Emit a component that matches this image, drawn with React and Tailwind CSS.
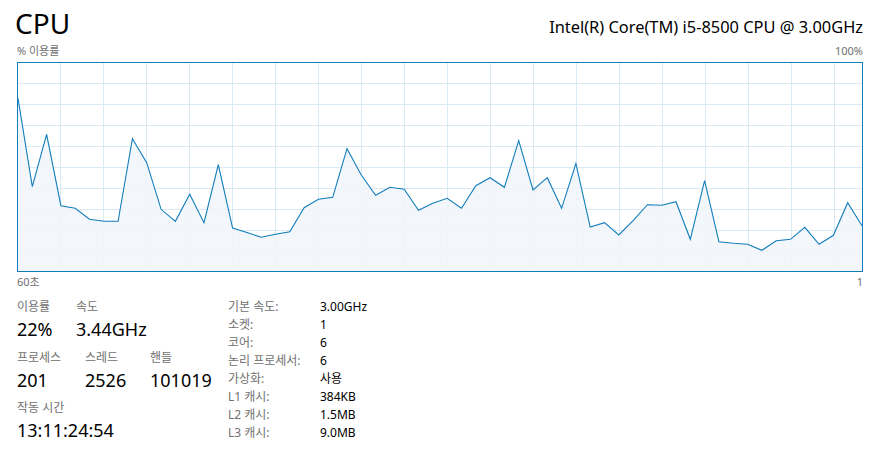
const font = { fontFamily: '"Noto Sans", "Noto Sans CJK KR", sans-serif' };

// samples read off the graph, page y coords (top of graph = 63)
const samples = [
  98.3, 186.7, 134.3, 205.7, 208.3, 219.3, 221.3, 221.3, 138.7, 162.7,
  209.3, 221.3, 194.3, 222.7, 164.7, 228, 232.4, 237.3, 234.3, 231.7,
  207.7, 199.3, 197.3, 148.7, 175, 195.3, 187.3, 189.3, 210.3, 203.3,
  198.3, 208.3, 185.7, 177.7, 187.3, 140.7, 190, 177.7, 208.3, 163.7,
  227, 222.7, 235, 220.7, 204.7, 205.3, 201.7, 239.3, 180.7, 241.7,
  243.3, 244.3, 250.3, 240.7, 239.3, 227.3, 244.3, 235.3, 202.7, 225.7,
];

const W = 844;
const H = 208;

function Graph() {
  const pts = samples.map((y, i) => [(i * W) / (samples.length - 1), y - 63]);
  const line = pts.map(([x, y]) => `${x.toFixed(1)},${y.toFixed(1)}`).join(" ");
  const area = `0,${H} ${line} ${W},${H}`;
  const vlines = [];
  for (let x = 42.5; x < W; x += 43) vlines.push(x);
  const hlines = [];
  for (let y = 20.5; y < H; y += 21) hlines.push(y);

  return (
    <div className="h-[210px] border border-[#117dbb] bg-white">
      <svg width={W} height={H} viewBox={`0 0 ${W} ${H}`} className="block">
        {vlines.map((x) => (
          <line key={"v" + x} x1={x} y1={0} x2={x} y2={H} stroke="#d9eaf4" strokeWidth="1" />
        ))}
        {hlines.map((y) => (
          <line key={"h" + y} x1={0} y1={y} x2={W} y2={y} stroke="#d9eaf4" strokeWidth="1" />
        ))}
        <polygon points={area} fill="#f1f6fa" fillOpacity="0.85" />
        <polyline points={line} fill="none" stroke="#117dbb" strokeWidth="1.1" strokeLinejoin="miter" />
      </svg>
    </div>
  );
}

const specs = [
  ["기본 속도:", "3.00GHz"],
  ["소켓:", "1"],
  ["코어:", "6"],
  ["논리 프로세서:", "6"],
  ["가상화:", "사용"],
  ["L1 캐시:", "384KB"],
  ["L2 캐시:", "1.5MB"],
  ["L3 캐시:", "9.0MB"],
];

function Stat({ label, value, className }) {
  return (
    <div className={className}>
      <div className="h-[16px] text-[12px] leading-[16px] text-[#707070]">{label}</div>
      <div className="h-[24px] mt-[2px] text-[18px] leading-[24px] text-black">{value}</div>
    </div>
  );
}

export default function App() {
  return (
    <div className="w-[878px] h-[458px] overflow-hidden bg-white pl-[17px] pr-[15px]" style={font}>
      <div className="flex items-end justify-between h-[40px]">
        <div className="text-[28px] leading-[34px] -ml-[2px] text-black">CPU</div>
        <div className="text-[16.4px] leading-[20px] mb-[3px] text-black">
          Intel(R) Core(TM) i5-8500 CPU @ 3.00GHz
        </div>
      </div>
      <div className="flex justify-between h-[15px] text-[11px] leading-[15px] text-[#707070] mt-[3px] mb-[4px]">
        <span>% 이용률</span>
        <span>100%</span>
      </div>
      <Graph />
      <div className="flex justify-between h-[15px] text-[11px] leading-[15px] text-[#707070] mt-[2px]">
        <span>60초</span>
        <span>1</span>
      </div>

      <div className="flex mt-[10px]">
        <div className="w-[211px]">
          <div className="flex">
            <Stat label="이용률" value="22%" className="w-[59px]" />
            <Stat label="속도" value="3.44GHz" />
          </div>
          <div className="flex mt-[9px]">
            <Stat label="프로세스" value="201" className="w-[68px]" />
            <Stat label="스레드" value="2526" className="w-[65px]" />
            <Stat label="핸들" value="101019" />
          </div>
          <Stat label="작동 시간" value="13:11:24:54" className="mt-[8px]" />
        </div>
        <div className="flex flex-col text-[12px] leading-[18px] -mt-[1px]">
          {specs.map(([k, v]) => (
            <div key={k} className="flex h-[18px]">
              <div className="w-[92px] text-[#707070]">{k}</div>
              <div className="text-black">{v}</div>
            </div>
          ))}
        </div>
      </div>
    </div>
  );
}
